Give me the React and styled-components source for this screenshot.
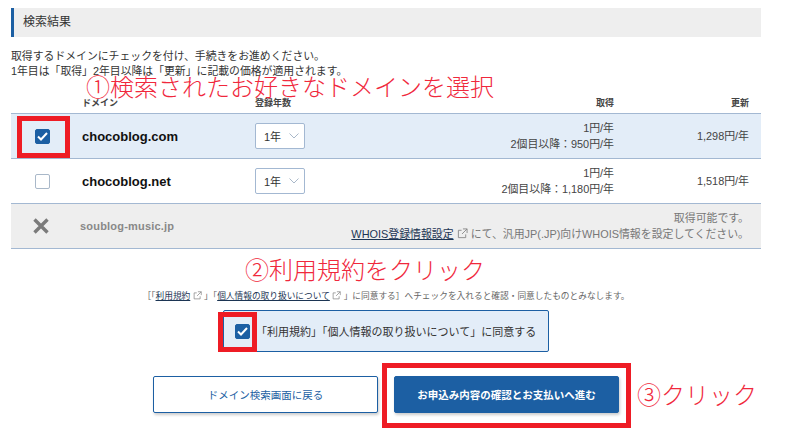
import styled, { createGlobalStyle } from "styled-components";

const GlobalStyle = createGlobalStyle`
  html, body {
    margin: 0;
    padding: 0;
    background: #fff;
  }
  body {
    font-family: "Liberation Sans", "Noto Sans CJK JP", sans-serif;
    color: #333;
    font-size: 11px;
  }
`;

function ExternalIcon({ size = 11, color = "#888" }) {
  return (
    <IconSvg width={size} height={size} viewBox="0 0 12 12" fill="none" stroke={color} strokeWidth="1">
      <path d="M5 2.5H1.5v8h8V7" />
      <path d="M6.5 1h4.5v4.5M11 1L5.5 6.5" />
    </IconSvg>
  );
}

function Chevron() {
  return (
    <svg width="10" height="6" viewBox="0 0 10 6" fill="none" stroke="#a9b8c9" strokeWidth="1">
      <path d="M0.5 0.5L5 5l4.5-4.5" />
    </svg>
  );
}

function Check() {
  return (
    <svg width="11" height="9" viewBox="0 0 11 9" fill="none" stroke="#fff" strokeWidth="2">
      <path d="M1 4.5L4 7.5 10 1" />
    </svg>
  );
}

function YearSelect() {
  return (
    <SelectBox>
      1年
      <Chevron />
    </SelectBox>
  );
}

export default function App() {
  return (
    <>
      <GlobalStyle />
      <Page>
        <Title>検索結果</Title>
        <Lead>
          取得するドメインにチェックを付け、手続きをお進めください。
          <br />
          1年目は「取得」2年目以降は「更新」に記載の価格が適用されます。
        </Lead>

        <HeadRow>
          <span />
          <span>ドメイン</span>
          <span>登録年数</span>
          <HeadRight>取得</HeadRight>
          <HeadRight>更新</HeadRight>
        </HeadRow>

        <Row $bg="#e3edf8">
          <CheckCell>
            <CheckBox $checked>
              <Check />
            </CheckBox>
          </CheckCell>
          <DomainName>chocoblog.com</DomainName>
          <YearSelect />
          <Price>
            1円/年
            <br />
            2個目以降：950円/年
          </Price>
          <Price>1,298円/年</Price>
        </Row>

        <Row>
          <CheckCell>
            <CheckBox />
          </CheckCell>
          <DomainName>chocoblog.net</DomainName>
          <YearSelect />
          <Price>
            1円/年
            <br />
            2個目以降：1,180円/年
          </Price>
          <Price>1,518円/年</Price>
        </Row>

        <DisabledRow>
          <CheckCell>
            <svg width="16" height="16" viewBox="0 0 16 16" stroke="#7b7b7b" strokeWidth="3.4">
              <path d="M1.5 1.5l13 13M14.5 1.5l-13 13" />
            </svg>
          </CheckCell>
          <DisabledName>soublog-music.jp</DisabledName>
          <Notice>
            取得可能です。
            <br />
            <DarkLink>WHOIS登録情報設定</DarkLink> <ExternalIcon /> にて、汎用JP(.JP)向けWHOIS情報を設定してください。
          </Notice>
        </DisabledRow>

        <Terms>
          ［「<DarkLink>利用規約</DarkLink> <ExternalIcon size={9} /> 」「<DarkLink>個人情報の取り扱いについて</DarkLink>{" "}
          <ExternalIcon size={9} /> 」に同意する］へチェックを入れると確認・同意したものとみなします。
        </Terms>

        <AgreeWrap>
          <AgreeBox>
            <CheckBox $checked>
              <Check />
            </CheckBox>
            「利用規約」「個人情報の取り扱いについて」に同意する
          </AgreeBox>
        </AgreeWrap>

        <Buttons>
          <BackButton>ドメイン検索画面に戻る</BackButton>
          <NextButton>お申込み内容の確認とお支払いへ進む</NextButton>
        </Buttons>

        {/* 赤い注釈 */}
        <Note $x={86} $y={73}>①検索されたお好きなドメインを選択</Note>
        <Note $x={245} $y={256}>②利用規約をクリック</Note>
        <Note $x={637} $y={381}>③クリック</Note>
        <RedFrame $x={17} $y={116} $w={53} $h={42} />
        <RedFrame $x={218} $y={312} $w={39} $h={40} />
        <RedFrame $x={382} $y={363} $w={249} $h={65} />
      </Page>
    </>
  );
}

const Page = styled.div`
  position: relative;
  width: 750px;
  height: 431px;
  padding: 8px 0 0 11px;
  overflow: hidden;
`;

const IconSvg = styled.svg`
  vertical-align: -1px;
`;

const Title = styled.h2`
  margin: 0;
  height: 29px;
  line-height: 29px;
  padding-left: 9px;
  background: #eeeeee;
  border-left: 3px solid #1c5fa3;
  font-size: 12px;
  font-weight: 400;
  color: #333;
`;

const Lead = styled.p`
  margin: 12px 0 0;
  line-height: 15px;
  font-size: 10.85px;
  color: #333;
`;

const gridColumns = "71px 173px 80px 279px 135px";

const HeadRow = styled.div`
  display: grid;
  grid-template-columns: ${gridColumns};
  height: 18px;
  margin-top: 16px;
  line-height: 16px;
  font-size: 9px;
  font-weight: 700;
  color: #444;
`;

const HeadRight = styled.span`
  text-align: right;
`;

const Row = styled.div`
  display: grid;
  grid-template-columns: ${gridColumns};
  align-items: center;
  height: 45px;
  box-sizing: border-box;
  background: ${(p) => p.$bg || "#fff"};
  border-top: 1px solid #a3b8d2;
`;

const DisabledRow = styled.div`
  display: grid;
  grid-template-columns: 69px 1fr auto;
  align-items: center;
  height: 46px;
  padding-right: 12px;
  box-sizing: border-box;
  background: #eeeeee;
  border-top: 1px solid #a3b8d2;
  border-bottom: 1px solid #a3b8d2;
`;

const CheckCell = styled.div`
  display: flex;
  justify-content: center;
  padding-right: 9px;
`;

const CheckBox = styled.span`
  display: inline-flex;
  align-items: center;
  justify-content: center;
  flex: none;
  width: 15px;
  height: 15px;
  box-sizing: border-box;
  border-radius: 2px;
  border: 1px solid ${(p) => (p.$checked ? "#1c5fa3" : "#a9b8c9")};
  background: ${(p) => (p.$checked ? "#1c5fa3" : "#fff")};
`;

const DomainName = styled.div`
  font-size: 13px;
  font-weight: 700;
  color: #111;
`;

const DisabledName = styled.div`
  font-size: 11px;
  font-weight: 700;
  letter-spacing: 0.2px;
  color: #888;
`;

const SelectBox = styled.div`
  display: flex;
  align-items: center;
  gap: 8px;
  width: 50px;
  height: 26px;
  padding-left: 8px;
  box-sizing: border-box;
  background: #fff;
  border: 1px solid #a3b8d2;
  border-radius: 2px;
  font-size: 11px;
  color: #333;
`;

const Price = styled.div`
  text-align: right;
  line-height: 16px;
  font-size: 10.9px;
  color: #444;
`;

const Notice = styled.div`
  text-align: right;
  line-height: 16px;
  font-size: 10.9px;
  color: #777;
`;

const DarkLink = styled.span`
  color: #1c3554;
  text-decoration: underline;
`;

const Terms = styled.p`
  margin: 41px 0 0;
  text-align: center;
  font-size: 8.7px;
  line-height: 12px;
  white-space: nowrap;
  color: #666;
`;

const AgreeWrap = styled.div`
  display: flex;
  justify-content: center;
  margin-top: 8px;
`;

const AgreeBox = styled.div`
  display: flex;
  align-items: center;
  gap: 6px;
  width: 326px;
  height: 42px;
  padding-left: 11px;
  box-sizing: border-box;
  background: #e3edf8;
  border: 1px solid #1c5fa3;
  border-radius: 2px;
  font-size: 11px;
  white-space: nowrap;
  color: #333;
`;

const Buttons = styled.div`
  display: flex;
  justify-content: center;
  gap: 16px;
  margin-top: 24px;
`;

const BackButton = styled.button`
  width: 225px;
  height: 37px;
  padding: 0;
  background: #fff;
  border: 1px solid #1c5fa3;
  border-radius: 2px;
  box-shadow: 1px 2px 3px rgba(0, 0, 0, 0.2);
  font-family: inherit;
  font-size: 10.5px;
  color: #1c5fa3;
`;

const NextButton = styled(BackButton)`
  background: #1c5fa3;
  font-weight: 700;
  color: #fff;
`;

const Note = styled.div`
  position: absolute;
  left: ${(p) => p.$x}px;
  top: ${(p) => p.$y}px;
  font-size: 24px;
  line-height: 30px;
  font-weight: 300;
  white-space: nowrap;
  color: #f0283c;
`;

const RedFrame = styled.div`
  position: absolute;
  left: ${(p) => p.$x}px;
  top: ${(p) => p.$y}px;
  width: ${(p) => p.$w}px;
  height: ${(p) => p.$h}px;
  box-sizing: border-box;
  border: 5px solid #ee1c25;
`;
